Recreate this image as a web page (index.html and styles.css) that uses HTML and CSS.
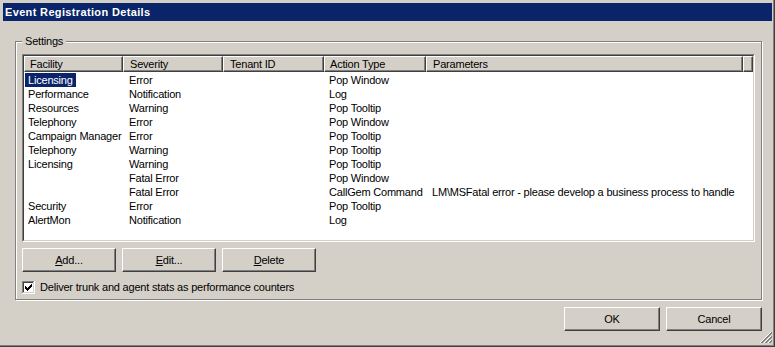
FILE: index.html
```html
<!DOCTYPE html>
<html>
<head>
<meta charset="utf-8"/>
<title>Event Registration Details</title>
<link rel="stylesheet" href="styles.css">
</head>
<body>
<div class="window">
<div class="titlebar">Event Registration Details</div>
<fieldset class="group">
<legend>Settings</legend>
<div class="listview">
<div class="lv-inner">
<div class="lv-head">
<div class="hd c1">Facility</div>
<div class="hd c2">Severity</div>
<div class="hd c3">Tenant ID</div>
<div class="hd c4">Action Type</div>
<div class="hd c5">Parameters</div>
<div class="hd filler"></div>
</div>
<div class="lv-body">
<div class="row"><div class="c1"><span class="sel">Licensing</span></div><div class="c2">Error</div><div class="c3"></div><div class="c4">Pop Window</div><div class="c5"></div></div>
<div class="row"><div class="c1"><span>Performance</span></div><div class="c2">Notification</div><div class="c3"></div><div class="c4">Log</div><div class="c5"></div></div>
<div class="row"><div class="c1"><span>Resources</span></div><div class="c2">Warning</div><div class="c3"></div><div class="c4">Pop Tooltip</div><div class="c5"></div></div>
<div class="row"><div class="c1"><span>Telephony</span></div><div class="c2">Error</div><div class="c3"></div><div class="c4">Pop Window</div><div class="c5"></div></div>
<div class="row"><div class="c1"><span>Campaign Manager</span></div><div class="c2">Error</div><div class="c3"></div><div class="c4">Pop Tooltip</div><div class="c5"></div></div>
<div class="row"><div class="c1"><span>Telephony</span></div><div class="c2">Warning</div><div class="c3"></div><div class="c4">Pop Tooltip</div><div class="c5"></div></div>
<div class="row"><div class="c1"><span>Licensing</span></div><div class="c2">Warning</div><div class="c3"></div><div class="c4">Pop Tooltip</div><div class="c5"></div></div>
<div class="row"><div class="c1"><span></span></div><div class="c2">Fatal Error</div><div class="c3"></div><div class="c4">Pop Window</div><div class="c5"></div></div>
<div class="row"><div class="c1"><span></span></div><div class="c2">Fatal Error</div><div class="c3"></div><div class="c4">CallGem Command</div><div class="c5">LM\MSFatal error - please develop a business process to handle</div></div>
<div class="row"><div class="c1"><span>Security</span></div><div class="c2">Error</div><div class="c3"></div><div class="c4">Pop Tooltip</div><div class="c5"></div></div>
<div class="row"><div class="c1"><span>AlertMon</span></div><div class="c2">Notification</div><div class="c3"></div><div class="c4">Log</div><div class="c5"></div></div>
</div>
</div>
</div>
<div class="btn-row">
<div class="btn"><u>A</u>dd...</div>
<div class="btn"><u>E</u>dit...</div>
<div class="btn"><u>D</u>elete</div>
</div>
<label class="check">
<svg class="checkbox" width="13" height="13" viewBox="0 0 13 13" shape-rendering="crispEdges">
<rect x="0" y="0" width="13" height="13" fill="#ffffff"/>
<rect x="0" y="0" width="12" height="1" fill="#808080"/>
<rect x="0" y="0" width="1" height="12" fill="#808080"/>
<rect x="1" y="1" width="10" height="1" fill="#404040"/>
<rect x="1" y="1" width="1" height="10" fill="#404040"/>
<rect x="1" y="11" width="11" height="1" fill="#d4d0c8"/>
<rect x="11" y="1" width="1" height="11" fill="#d4d0c8"/>
<rect x="9" y="3" width="1" height="3" fill="#000"/>
<rect x="8" y="4" width="1" height="3" fill="#000"/>
<rect x="7" y="5" width="1" height="3" fill="#000"/>
<rect x="6" y="6" width="1" height="3" fill="#000"/>
<rect x="5" y="7" width="1" height="3" fill="#000"/>
<rect x="4" y="6" width="1" height="3" fill="#000"/>
<rect x="3" y="5" width="1" height="3" fill="#000"/>
</svg>
<span>Deliver trunk and agent stats as performance counters</span>
</label>
</fieldset>
<div class="dlg-buttons">
<div class="btn wide">OK</div>
<div class="btn wide">Cancel</div>
</div>
<svg class="grip" width="12" height="12" viewBox="0 0 12 12" shape-rendering="crispEdges">
<path d="M11 0 L0 11 M11 4 L4 11 M11 8 L8 11" stroke="#ffffff" stroke-width="1" fill="none"/>
<path d="M11.5 0.5 L0.5 11.5 M11.5 1.5 L1.5 11.5 M11.5 4.5 L4.5 11.5 M11.5 5.5 L5.5 11.5 M11.5 8.5 L8.5 11.5 M11.5 9.5 L9.5 11.5" stroke="#808080" stroke-width="1" fill="none"/>
</svg>
</div>
</body>
</html>
```

FILE: styles.css
```css
body {
margin: 0;
background-color: #d4d0c8;
font-family: "Liberation Sans", Arial, sans-serif;
font-size: 11px;
letter-spacing: -0.2px;
color: black;
user-select: none;
}
.window {
position: relative;
width: 775px;
height: 347px;
box-sizing: border-box;
border-right: 1px solid #404040;
border-bottom: 1px solid #404040;
box-shadow: inset -1px -1px 0 #808080;
display: flex;
flex-direction: column;
}
.titlebar {
margin: 3px 2px 0 3px;
height: 18px;
line-height: 18px;
padding-left: 2px;
background-color: #0a246a;
color: white;
font-weight: bold;
letter-spacing: 0.35px;
}
.group {
margin: 14px 0 0 15px;
width: 747px;
box-sizing: border-box;
padding: 6px 6px 5px 6px;
border: 1px solid #808080;
box-shadow: inset 1px 1px 0 #fff, 1px 1px 0 #fff;
min-width: 0;
}
.group legend {
padding: 0 3px;
line-height: 13px;
height: 13px;
background-color: #d4d0c8;
}
.listview {
height: 188px;
box-sizing: border-box;
border: 1px solid;
border-color: #808080 #fff #fff #808080;
}
.lv-inner {
height: 100%;
box-sizing: border-box;
border: 1px solid;
border-color: #404040 #d4d0c8 #d4d0c8 #404040;
background-color: white;
overflow: hidden;
}
.lv-head, .row {
display: flex;
}
.c1 { width: 99px; }
.c2 { width: 100px; }
.c3 { width: 101px; }
.c4 { width: 102px; }
.c5 { width: 317px; }
.filler { flex: 1; }
.hd {
height: 16px;
line-height: 14px;
box-sizing: border-box;
padding-left: 5px;
background-color: #d4d0c8;
border-top: 1px solid #fff;
border-left: 1px solid #fff;
border-right: 1px solid #404040;
border-bottom: 1px solid #404040;
box-shadow: inset -1px -1px 0 #808080;
white-space: nowrap;
}
.hd.c2, .hd.c3, .hd.c5 {
padding-left: 6px;
}
.lv-body {
padding-top: 1px;
}
.row {
height: 14px;
line-height: 14px;
white-space: nowrap;
}
.row > div {
box-sizing: border-box;
padding-left: 6px;
}
.row > .c4 {
padding-left: 5px;
}
.row > .c1 {
padding-left: 1px;
}
.row > .c1 span {
display: inline-block;
padding: 0 3px;
}
.row .sel {
background-color: #0a246a;
color: white;
}
.btn-row {
display: flex;
gap: 6px;
margin-top: 6px;
}
.btn {
width: 94px;
height: 24px;
box-sizing: border-box;
line-height: 22px;
text-align: center;
background-color: #d4d0c8;
border: 1px solid;
border-color: #fff #404040 #404040 #fff;
box-shadow: inset -1px -1px 0 #808080;
cursor: default;
}
.btn.wide {
width: 96px;
}
.check {
display: flex;
align-items: center;
margin-top: 9px;
height: 13px;
line-height: 13px;
}
.checkbox {
display: block;
margin-right: 5px;
}
.dlg-buttons {
display: flex;
justify-content: flex-end;
gap: 6px;
margin: 7px 12px 0 0;
}
.grip {
position: absolute;
right: 2px;
bottom: 2px;
}
```
